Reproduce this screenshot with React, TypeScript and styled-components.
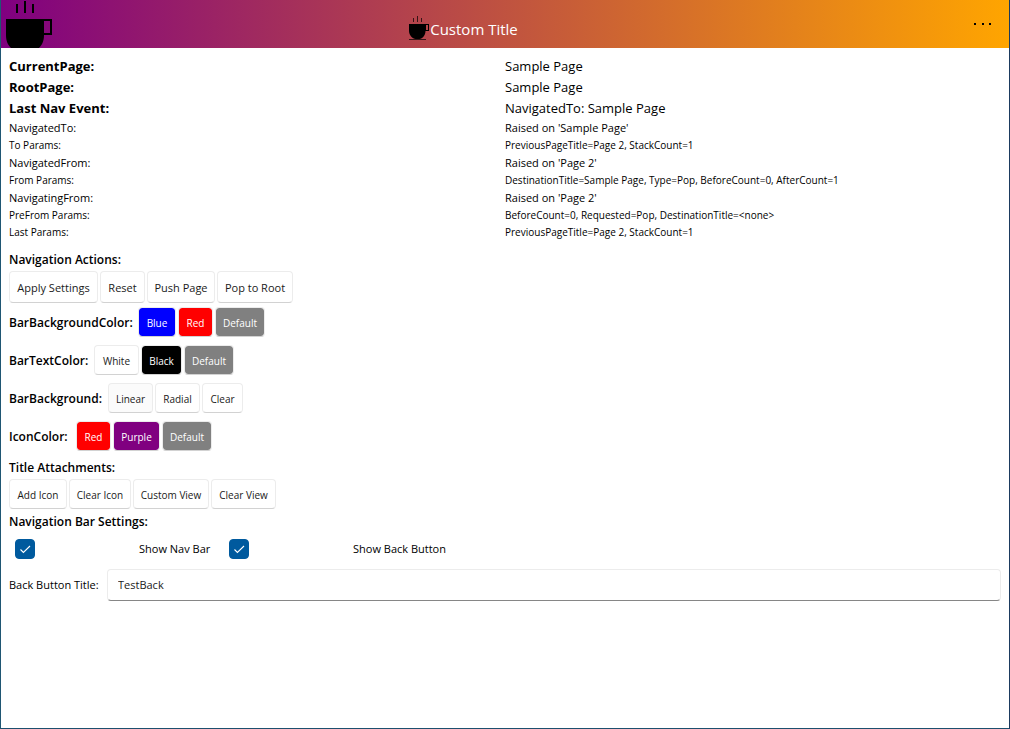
import React from "react";
import styled, { createGlobalStyle } from "styled-components";

const Global = createGlobalStyle`
  *, *::before, *::after { box-sizing: border-box; }
  body { margin: 0; background: #fff; }
  body, button, input { font-family: "Open Sans", "Noto Sans", sans-serif; }
`;

const Window = styled.div`
  min-height: 100vh;
  display: flex;
  flex-direction: column;
  border: solid #1b3a5e;
  border-width: 0 1px 1px;
  border-left-color: #1f5673;
  border-bottom-color: #1d4f6e;
  color: #000;
`;

const NavBar = styled.header`
  height: 48px;
  flex: none;
  display: grid;
  grid-template-columns: 52px 1fr 52px;
  align-items: center;
  overflow: hidden;
  background: linear-gradient(to right, #800080, #ffa500);
`;

const BackIcon = styled.svg`
  display: block;
  width: 52px;
  height: 48px;
`;

const TitleView = styled.div`
  display: flex;
  justify-content: center;
  align-items: center;
  padding: 10px 84px 0 0;
`;

const TitleIcon = styled.svg`
  width: 22px;
  height: 26px;
  flex: none;
`;

const Title = styled.h1`
  margin: 0;
  font-size: 15px;
  line-height: 20px;
  font-weight: 400;
  color: #fff;
  white-space: nowrap;
`;

const MoreButton = styled.button`
  height: 48px;
  padding: 0;
  border: 0;
  background: none;
  display: flex;
  align-items: center;
  justify-content: center;
`;

const Content = styled.main`
  padding: 8px;
  display: flex;
  flex-direction: column;
`;

const sizes = {
  large: { font: 13, value: 13, line: 21 },
  medium: { font: 11, value: 11, line: 18 },
  small: { font: 10, value: 10, line: 17 },
};
type Size = keyof typeof sizes;

const Info = styled.dl`
  margin: 0;
`;

const InfoRow = styled.div<{ $size: Size }>`
  display: grid;
  grid-template-columns: 1fr 1fr;
  line-height: ${(p) => sizes[p.$size].line}px;
  white-space: nowrap;
`;

const InfoLabel = styled.dt<{ $size: Size }>`
  font-size: ${(p) => sizes[p.$size].font}px;
  font-weight: ${(p) => (p.$size === "large" ? 700 : 400)};
`;

const InfoValue = styled.dd<{ $size: Size }>`
  margin: 0;
  font-size: ${(p) => sizes[p.$size].value}px;
`;

const Section = styled.section<{ $top: number }>`
  margin-top: ${(p) => p.$top}px;
`;

const SectionTitle = styled.h2`
  margin: 0 0 3px;
  font-size: 12px;
  line-height: 16px;
  font-weight: 600;
`;

const ButtonRow = styled.div`
  display: flex;
  align-items: center;
  gap: 2px;
`;

const SettingRows = styled.div`
  margin-top: 4px;
  display: flex;
  flex-direction: column;
  gap: 8px;
`;

const SettingLabel = styled.span<{ $width: number }>`
  width: ${(p) => p.$width}px;
  padding-top: 2px;
  font-size: 12px;
  line-height: 16px;
  font-weight: 600;
  white-space: nowrap;
`;

const Button = styled.button<{ $width: number; $fill?: string; $large?: boolean }>`
  width: ${(p) => p.$width}px;
  height: ${(p) => (p.$large ? 32 : 30)}px;
  padding: 2px 0 0;
  border: 1px solid #ececec;
  border-bottom-color: #d2d2d2;
  border-radius: 4px;
  background: ${(p) => p.$fill ?? "#fff"};
  background-clip: padding-box;
  color: ${(p) => (p.$fill && p.$fill !== "#fbfbfb" ? "#fff" : "#1a1a1a")};
  font-size: ${(p) => (p.$large ? 11 : 10)}px;
  line-height: 16px;
  white-space: nowrap;
`;

const CheckRow = styled.div`
  display: flex;
  padding-left: 6px;
  margin-top: 9px;
`;

const CheckLabel = styled.label<{ $width?: number }>`
  display: flex;
  align-items: center;
  gap: 104px;
  width: ${(p) => (p.$width ? `${p.$width}px` : "auto")};
  font-size: 11px;
  line-height: 20px;
  white-space: nowrap;
`;

const Check = styled.input`
  appearance: none;
  flex: none;
  width: 20px;
  height: 20px;
  margin: 0;
  border: 1px solid #005a9e;
  border-radius: 4px;
  &:checked {
    background: #005a9e
      url("data:image/svg+xml,%3Csvg xmlns='http://www.w3.org/2000/svg' viewBox='0 0 18 18'%3E%3Cpath d='M4.5 9.5 7.4 12.4 14 6' fill='none' stroke='white' stroke-width='1.1'/%3E%3C/svg%3E");
  }
`;

const Field = styled.div`
  display: flex;
  align-items: center;
  margin-top: 10px;
`;

const FieldLabel = styled.label`
  width: 98px;
  font-size: 11px;
  line-height: 16px;
  white-space: nowrap;
`;

const TextBox = styled.input`
  flex: 1;
  min-width: 0;
  height: 32px;
  padding: 0 10px 1px;
  border: 1px solid #ececec;
  border-bottom-color: #868686;
  border-radius: 4px;
  background: #fff;
  color: #1a1a1a;
  font-size: 11px;
`;

const info: [string, string, Size][] = [
  ["CurrentPage:", "Sample Page", "large"],
  ["RootPage:", "Sample Page", "large"],
  ["Last Nav Event:", "NavigatedTo: Sample Page", "large"],
  ["NavigatedTo:", "Raised on 'Sample Page'", "medium"],
  ["To Params:", "PreviousPageTitle=Page 2, StackCount=1", "small"],
  ["NavigatedFrom:", "Raised on 'Page 2'", "medium"],
  ["From Params:", "DestinationTitle=Sample Page, Type=Pop, BeforeCount=0, AfterCount=1", "small"],
  ["NavigatingFrom:", "Raised on 'Page 2'", "medium"],
  ["PreFrom Params:", "BeforeCount=0, Requested=Pop, DestinationTitle=<none>", "small"],
  ["Last Params:", "PreviousPageTitle=Page 2, StackCount=1", "small"],
];

type Action = { text: string; width: number; fill?: string };

const actions: Action[] = [
  { text: "Apply Settings", width: 89 },
  { text: "Reset", width: 45 },
  { text: "Push Page", width: 68 },
  { text: "Pop to Root", width: 76 },
];

const settings: { label: string; width: number; options: Action[] }[] = [
  {
    label: "BarBackgroundColor:",
    width: 127,
    options: [
      { text: "Blue", width: 38, fill: "#0000ff" },
      { text: "Red", width: 35, fill: "#ff0000" },
      { text: "Default", width: 50, fill: "#808080" },
    ],
  },
  {
    label: "BarTextColor:",
    width: 83,
    options: [
      { text: "White", width: 45 },
      { text: "Black", width: 41, fill: "#000000" },
      { text: "Default", width: 50, fill: "#808080" },
    ],
  },
  {
    label: "BarBackground:",
    width: 97,
    options: [
      { text: "Linear", width: 45, fill: "#fbfbfb" },
      { text: "Radial", width: 45 },
      { text: "Clear", width: 41 },
    ],
  },
  {
    label: "IconColor:",
    width: 65,
    options: [
      { text: "Red", width: 35, fill: "#ff0000" },
      { text: "Purple", width: 47, fill: "#800080" },
      { text: "Default", width: 50, fill: "#808080" },
    ],
  },
];

const attachments: Action[] = [
  { text: "Add Icon", width: 58 },
  { text: "Clear Icon", width: 62 },
  { text: "Custom View", width: 76 },
  { text: "Clear View", width: 65 },
];

const Buttons = ({ items, large }: { items: Action[]; large?: boolean }) => (
  <>
    {items.map((b) => (
      <Button key={b.text} type="button" $width={b.width} $fill={b.fill} $large={large}>
        {b.text}
      </Button>
    ))}
  </>
);

export default function App() {
  return (
    <>
      <Global />
      <Window>
        <NavBar>
          <BackIcon viewBox="0 0 52 48" aria-hidden="true">
            <path d="M15 4h2v9h-2zM23 1h2v12h-2zM31 4h2v9h-2z" />
            <path d="M5 19h46v16h-8c0 6-2 10-5 13H10c-3-3-5-7-5-13zM43 21v12h6V21z" fillRule="evenodd" />
          </BackIcon>
          <TitleView>
            <TitleIcon viewBox="0 1 22 26" aria-hidden="true">
              <path d="M5 3h1v4H5zM9 1h1v6H9zM13 3h1v4h-1z" opacity=".7" />
              <path d="M1 9h20v7h-3.500c0 4-3 8-6 8H7.500c-3 0-6.500-4-6.500-8zM18 10v5h2v-5z" fillRule="evenodd" />
              <path d="M1 24h17v1H1z" opacity=".7" />
            </TitleIcon>
            <Title>Custom Title</Title>
          </TitleView>
          <MoreButton type="button" aria-label="More">
            <svg width="20" height="4" viewBox="0 0 20 4">
              <path d="M1 1h2v2H1zM9 1h2v2H9zM16 1h2v2h-2z" />
            </svg>
          </MoreButton>
        </NavBar>
        <Content>
          <Info>
            {info.map(([label, value, size]) => (
              <InfoRow key={label} $size={size}>
                <InfoLabel $size={size}>{label}</InfoLabel>
                <InfoValue $size={size}>{value}</InfoValue>
              </InfoRow>
            ))}
          </Info>
          <Section $top={11}>
            <SectionTitle>Navigation Actions:</SectionTitle>
            <ButtonRow>
              <Buttons items={actions} large />
            </ButtonRow>
          </Section>
          <SettingRows>
            {settings.map((s) => (
              <ButtonRow key={s.label}>
                <SettingLabel $width={s.width}>{s.label}</SettingLabel>
                <Buttons items={s.options} />
              </ButtonRow>
            ))}
          </SettingRows>
          <Section $top={9}>
            <SectionTitle>Title Attachments:</SectionTitle>
            <ButtonRow>
              <Buttons items={attachments} />
            </ButtonRow>
          </Section>
          <Section $top={5}>
            <SectionTitle>Navigation Bar Settings:</SectionTitle>
            <CheckRow>
              <CheckLabel $width={214}>
                <Check type="checkbox" defaultChecked />
                Show Nav Bar
              </CheckLabel>
              <CheckLabel>
                <Check type="checkbox" defaultChecked />
                Show Back Button
              </CheckLabel>
            </CheckRow>
            <Field>
              <FieldLabel htmlFor="back-title">Back Button Title:</FieldLabel>
              <TextBox id="back-title" type="text" defaultValue="TestBack" />
            </Field>
          </Section>
        </Content>
      </Window>
    </>
  );
}
